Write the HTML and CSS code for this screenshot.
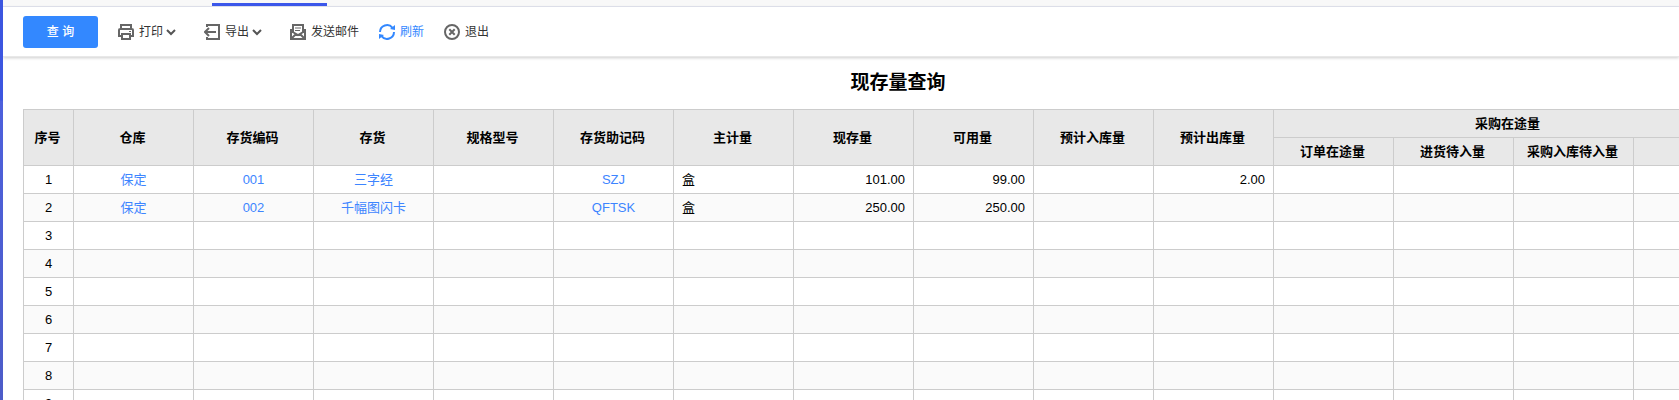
FILE: index.html
```html
<!DOCTYPE html>
<html lang="zh-CN">

<head>
  <meta charset="utf-8">
  <title>现存量查询</title>
  <link rel="stylesheet" href="styles.css">
</head>

<body>
  <div class="side"></div>
  <div class="main">
    <div class="tabs">
      <div class="tab-active"></div>
    </div>

    <div class="toolbar">
      <button type="button" class="btn-query">查 询</button>
      <button type="button" class="tool has-menu">
        <svg class="icon" viewBox="0 0 16 16" fill="none" stroke="#666" stroke-width="2">
          <path d="M3 5V1h10v4M3 12H1V6q0-1 1-1h12q1 0 1 1v6h-2M4 10h8v5H4z"/>
          <path d="M11 7.500h2" stroke-width="1"/>
        </svg>
        <span>打印</span>
        <svg class="caret" viewBox="0 0 10 8" fill="none" stroke="#555" stroke-width="2"><path d="M1 2l4 4 4-4"/></svg>
      </button>
      <button type="button" class="tool has-menu">
        <svg class="icon" viewBox="0 0 16 16" fill="none" stroke="#666" stroke-width="2">
          <path d="M3 3V1h12v14H3v-2M1 8h11M5 4L1 8l4 4"/>
        </svg>
        <span>导出</span>
        <svg class="caret" viewBox="0 0 10 8" fill="none" stroke="#555" stroke-width="2"><path d="M1 2l4 4 4-4"/></svg>
      </button>
      <button type="button" class="tool">
        <svg class="icon" viewBox="0 0 16 16" fill="none" stroke="#666" stroke-width="2">
          <path d="M3 8V1h10v7M1 5v10h14V5M1 7l7 4 7-4M2 14l4-4M14 14l-4-4"/>
          <path d="M5 4h6M5 6.500h5" stroke-width="1"/>
        </svg>
        <span>发送邮件</span>
      </button>
      <button type="button" class="tool refresh">
        <svg class="icon" viewBox="0 0 16 16" fill="none" stroke="#3388ff" stroke-width="2">
          <path d="M1 8A7 7 0 0 1 13.500 3.800M15 8A7 7 0 0 1 2.500 12.200"/>
          <path d="M16 1v5l-5-1zM0 15v-5l5 1z" fill="#3388ff" stroke="none"/>
        </svg>
        <span>刷新</span>
      </button>
      <button type="button" class="tool">
        <svg class="icon" viewBox="0 0 16 16" fill="none" stroke="#666" stroke-width="2">
          <circle cx="8" cy="8" r="7"/>
          <path d="M5.300 5.300l5.400 5.400M10.700 5.300l-5.400 5.400"/>
        </svg>
        <span>退出</span>
      </button>
    </div>

    <div class="report">
      <h1>现存量查询</h1>
      <table>
        <colgroup>
          <col class="col-no">
          <col class="col" span="13">
          <col class="col-last">
        </colgroup>
        <thead>
          <tr>
            <th rowspan="2">序号</th>
            <th rowspan="2">仓库</th>
            <th rowspan="2">存货编码</th>
            <th rowspan="2">存货</th>
            <th rowspan="2">规格型号</th>
            <th rowspan="2">存货助记码</th>
            <th rowspan="2">主计量</th>
            <th rowspan="2">现存量</th>
            <th rowspan="2">可用量</th>
            <th rowspan="2">预计入库量</th>
            <th rowspan="2">预计出库量</th>
            <th colspan="4">采购在途量</th>
          </tr>
          <tr>
            <th>订单在途量</th>
            <th>进货待入量</th>
            <th>采购入库待入量</th>
            <th></th>
          </tr>
        </thead>
        <tbody>
          <tr>
            <td>1</td>
            <td><a href="#">保定</a></td>
            <td><a href="#">001</a></td>
            <td><a href="#">三字经</a></td>
            <td></td>
            <td><a href="#">SZJ</a></td>
            <td class="unit">盒</td>
            <td class="num">101.00</td>
            <td class="num">99.00</td>
            <td></td>
            <td class="num">2.00</td>
            <td></td><td></td><td></td><td></td>
          </tr>
          <tr>
            <td>2</td>
            <td><a href="#">保定</a></td>
            <td><a href="#">002</a></td>
            <td><a href="#">千幅图闪卡</a></td>
            <td></td>
            <td><a href="#">QFTSK</a></td>
            <td class="unit">盒</td>
            <td class="num">250.00</td>
            <td class="num">250.00</td>
            <td></td>
            <td></td>
            <td></td><td></td><td></td><td></td>
          </tr>
          <tr><td>3</td><td></td><td></td><td></td><td></td><td></td><td></td><td></td><td></td><td></td><td></td><td></td><td></td><td></td><td></td></tr>
          <tr><td>4</td><td></td><td></td><td></td><td></td><td></td><td></td><td></td><td></td><td></td><td></td><td></td><td></td><td></td><td></td></tr>
          <tr><td>5</td><td></td><td></td><td></td><td></td><td></td><td></td><td></td><td></td><td></td><td></td><td></td><td></td><td></td><td></td></tr>
          <tr><td>6</td><td></td><td></td><td></td><td></td><td></td><td></td><td></td><td></td><td></td><td></td><td></td><td></td><td></td><td></td></tr>
          <tr><td>7</td><td></td><td></td><td></td><td></td><td></td><td></td><td></td><td></td><td></td><td></td><td></td><td></td><td></td><td></td></tr>
          <tr><td>8</td><td></td><td></td><td></td><td></td><td></td><td></td><td></td><td></td><td></td><td></td><td></td><td></td><td></td><td></td></tr>
          <tr><td>9</td><td></td><td></td><td></td><td></td><td></td><td></td><td></td><td></td><td></td><td></td><td></td><td></td><td></td><td></td></tr>
        </tbody>
      </table>
    </div>
  </div>
</body>
</html>
```

FILE: styles.css
```css
* {
  box-sizing: border-box;
}

body {
  display: flex;
  height: 100vh;
  margin: 0;
  overflow: hidden;
  font-family: "Liberation Sans", "Noto Sans CJK SC", sans-serif;
  font-size: 13px;
  color: #000;
  background-color: #fff;
}

.side {
  flex: none;
  width: 3px;
  background: linear-gradient(#3c56e0 0, #3c56e0 100px, #4d60dc 101px, #4d5cc8 100%);
}

.main {
  flex: 1;
  min-width: 0;
  overflow: hidden;
}

.tabs {
  display: flex;
  align-items: flex-end;
  height: 7px;
  padding-left: 209px;
  background-color: #f8f8f8;
  border-bottom: 1px solid #e4e6f0;
}

.tab-active {
  width: 115px;
  height: 3px;
  background-color: #3b57ea;
}

/* toolbar */
.toolbar {
  display: flex;
  align-items: center;
  gap: 20px;
  height: 50px;
  padding-left: 20px;
  border-bottom: 1px solid #e8e8e8;
  box-shadow: 0 1px 3px rgba(0, 0, 0, 0.2);
}

button {
  font-family: inherit;
  border: none;
  cursor: pointer;
}

.btn-query {
  width: 75px;
  height: 32px;
  padding: 0 0 2px;
  font-size: 12px;
  font-weight: 500;
  color: #fff;
  background-color: #3388ff;
  border-radius: 3px;
}

.tool {
  display: flex;
  align-items: center;
  padding: 0;
  font-size: 12px;
  color: #333;
  background: none;
}

.tool span {
  padding-bottom: 2px;
}

.has-menu {
  margin-right: 8px;
}

.refresh {
  color: #3388ff;
}

.icon {
  width: 16px;
  height: 16px;
  margin-right: 5px;
}

.caret {
  width: 10px;
  height: 8px;
  margin-left: 3px;
}

/* report sheet, wider than the window */
.report {
  width: 1750px;
  margin-left: 20px;
}

h1 {
  margin: 0;
  padding: 12px 0;
  font-size: 19px;
  line-height: 28px;
  text-align: center;
}

table {
  width: 1721px;
  table-layout: fixed;
  border-collapse: separate;
  border-spacing: 0;
  border-top: 1px solid #ccc;
  border-left: 1px solid #ccc;
}

.col-no {
  width: 50px;
}

.col {
  width: 120px;
}

.col-last {
  width: 110px;
}

th, td {
  height: 28px;
  padding: 0 8px;
  line-height: 20px;
  text-align: center;
  white-space: nowrap;
  border-right: 1px solid #ccc;
  border-bottom: 1px solid #ccc;
}

th {
  padding-right: 10px;
  background-color: #e8e8e8;
}

tbody tr:nth-child(even) {
  background-color: #fafafa;
}

td a {
  color: #3d85ff;
  text-decoration: none;
}

.unit {
  text-align: left;
}

.num {
  text-align: right;
}
```
